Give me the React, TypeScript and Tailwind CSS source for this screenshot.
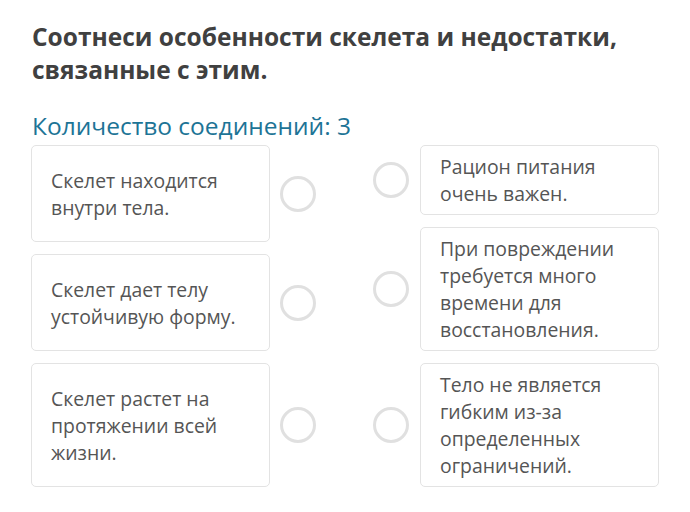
const left = [
  { text: "Скелет находится внутри тела.", h: "h-[97px]" },
  { text: "Скелет дает телу устойчивую форму.", h: "h-[97px]" },
  { text: "Скелет растет на протяжении всей жизни.", h: "h-[124px]" },
]

const right = [
  { text: "Рацион питания очень важен.", h: "h-[70px]" },
  { text: "При повреждении требуется много времени для восстановления.", h: "h-[124px]" },
  { text: "Тело не является гибким из-за определенных ограничений.", h: "h-[124px]" },
]

function Ring() {
  return <div className="w-[36px] h-[36px] shrink-0 rounded-full border-[3px] border-[#e0e0e0] bg-white" />
}

function Card({ text, h }: { text: string; h: string }) {
  return (
    <div className={`w-[239px] ${h} shrink-0 flex items-center rounded-[5px] border border-[#e3e3e3] bg-white pl-[19px] pr-3`}>
      <p className="text-[19.4px] leading-[27px] text-[#555555]">{text}</p>
    </div>
  )
}

export default function App() {
  return (
    <div className="w-[690px] h-[512px] bg-white px-[31px] pt-[20px] font-['Open_Sans',sans-serif]">
      <h1 className="pl-px text-[24.5px] font-bold leading-[33px] text-[#404040]">
        Соотнеси особенности скелета и недостатки, связанные с этим.
      </h1>
      <div className="mt-[25px] pl-px text-[24.5px] leading-[30px] text-[#1d7496]">Количество соединений: 3</div>
      <div className="mt-[4px] flex justify-between">
        <div className="flex flex-col gap-3">
          {left.map((c) => (
            <div key={c.text} className="flex items-center gap-[10px]">
              <Card text={c.text} h={c.h} />
              <Ring />
            </div>
          ))}
        </div>
        <div className="flex flex-col gap-3">
          {right.map((c) => (
            <div key={c.text} className="flex items-center gap-[11px]">
              <Ring />
              <Card text={c.text} h={c.h} />
            </div>
          ))}
        </div>
      </div>
    </div>
  )
}
